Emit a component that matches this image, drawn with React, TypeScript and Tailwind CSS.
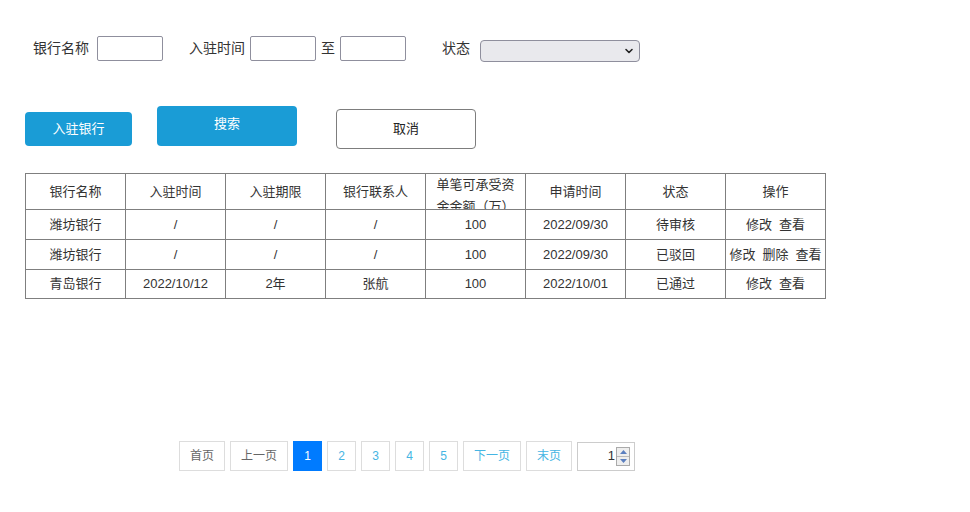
import React from 'react';

const rows = [
  { name: '潍坊银行', time: '/', term: '/', contact: '/', amount: '100', apply: '2022/09/30', status: '待审核', ops: ['修改', '查看'] },
  { name: '潍坊银行', time: '/', term: '/', contact: '/', amount: '100', apply: '2022/09/30', status: '已驳回', ops: ['修改', '删除', '查看'] },
  { name: '青岛银行', time: '2022/10/12', term: '2年', contact: '张航', amount: '100', apply: '2022/10/01', status: '已通过', ops: ['修改', '查看'] },
];

const headers = ['银行名称', '入驻时间', '入驻期限', '银行联系人', '单笔可承受资金金额（万）', '申请时间', '状态', '操作'];

function PageButton({ label, active, muted, width }: { label: string; active?: boolean; muted?: boolean; width: string }) {
  return (
    <div
      className={`${width} h-[30px] flex items-center justify-center text-[12px] border ${
        active
          ? 'bg-[#007bff] border-[#007bff] text-white'
          : muted
          ? 'border-[#dddddd] text-[#666666] bg-white'
          : 'border-[#dddddd] text-[#45b5e3] bg-white'
      }`}
    >
      {label}
    </div>
  );
}

export default function App() {
  return (
    <div
      className="w-[970px] h-[512px] bg-white text-[#333333] overflow-hidden"
      style={{ fontFamily: '"Liberation Sans", "Noto Sans CJK SC", sans-serif' }}
    >
      {/* filter row */}
      <div className="flex items-start pt-[36px] pl-[33px] text-[14px]">
        <span className="leading-[25px] mr-[8px]">银行名称</span>
        <input className="w-[66px] h-[25px] border border-[#8f8f9d] rounded-[2px] bg-white" />
        <span className="leading-[25px] ml-[26px] mr-[5px]">入驻时间</span>
        <input className="w-[66px] h-[25px] border border-[#8f8f9d] rounded-[2px] bg-white" />
        <span className="leading-[25px] ml-[5px] mr-[5px]">至</span>
        <input className="w-[66px] h-[25px] border border-[#8f8f9d] rounded-[2px] bg-white" />
        <span className="leading-[25px] ml-[36px] mr-[10px]">状态</span>
        <div className="mt-[4px] w-[160px] h-[22px] border border-[#8f8f9d] rounded-[4px] bg-[#e9e9ed] flex items-center justify-end pr-[5px]">
          <svg width="10" height="10" viewBox="0 0 10 10">
            <path d="M2 3.5 L5 6.5 L8 3.5" fill="none" stroke="#222" strokeWidth="1.6" strokeLinecap="round" strokeLinejoin="round" />
          </svg>
        </div>
      </div>

      {/* buttons */}
      <div className="flex items-start mt-[44px] pl-[25px] text-[13px]">
        <button className="mt-[6px] w-[107px] h-[34px] rounded-[4px] bg-[#1a9cd6] text-white">入驻银行</button>
        <button className="ml-[25px] w-[140px] h-[40px] rounded-[4px] bg-[#1a9cd6] text-white pb-[4px]">搜索</button>
        <button className="ml-[39px] mt-[3px] w-[140px] h-[40px] rounded-[4px] border border-[#7d7d7d] bg-white text-[#222222]">取消</button>
      </div>

      {/* table */}
      <table className="ml-[25px] mt-[24px] border-collapse text-[13px] table-fixed w-[800px]">
        <thead>
          <tr>
            {headers.map((h) => (
              <th key={h} className="w-[100px] border border-[#7f7f7f] font-normal p-0">
                {h.length > 6 ? (
                  <div className="h-[35px] overflow-hidden px-[6px] leading-[22px] text-center">{h}</div>
                ) : (
                  <div className="h-[35px] flex items-center justify-center">{h}</div>
                )}
              </th>
            ))}
          </tr>
        </thead>
        <tbody>
          {rows.map((r, i) => (
            <tr key={i} className={i === 2 ? 'h-[29px]' : 'h-[30px]'}>
              {[r.name, r.time, r.term, r.contact, r.amount, r.apply, r.status].map((c, j) => (
                <td key={j} className="border border-[#7f7f7f] text-center p-0">{c}</td>
              ))}
              <td className="border border-[#7f7f7f] text-center p-0 whitespace-nowrap">
                <div className="flex justify-center gap-[7px]">
                  {r.ops.map((o) => (
                    <span key={o}>{o}</span>
                  ))}
                </div>
              </td>
            </tr>
          ))}
        </tbody>
      </table>

      {/* pagination */}
      <div className="flex items-center gap-[5px] mt-[142px] ml-[179px]">
        <PageButton label="首页" muted width="w-[46px]" />
        <PageButton label="上一页" muted width="w-[58px]" />
        <PageButton label="1" active width="w-[29px]" />
        <PageButton label="2" width="w-[29px]" />
        <PageButton label="3" width="w-[29px]" />
        <PageButton label="4" width="w-[29px]" />
        <PageButton label="5" width="w-[29px]" />
        <PageButton label="下一页" width="w-[58px]" />
        <PageButton label="末页" width="w-[46px]" />
        <div className="w-[58px] h-[29px] border border-[#cccccc] flex items-center justify-end pr-[4px] text-[13px]">
          <span className="mr-[1px]">1</span>
          <div className="flex flex-col w-[14px] h-[19px] border border-[#aaaaaa] bg-[#eeeeee]">
            <div className="flex-1 flex items-center justify-center border-b border-[#bbbbbb]">
              <svg width="7" height="4" viewBox="0 0 7 4"><path d="M0 4 L3.5 0 L7 4 Z" fill="#5b7fbf" /></svg>
            </div>
            <div className="flex-1 flex items-center justify-center">
              <svg width="7" height="4" viewBox="0 0 7 4"><path d="M0 0 L3.5 4 L7 0 Z" fill="#5b7fbf" /></svg>
            </div>
          </div>
        </div>
      </div>
    </div>
  );
}
